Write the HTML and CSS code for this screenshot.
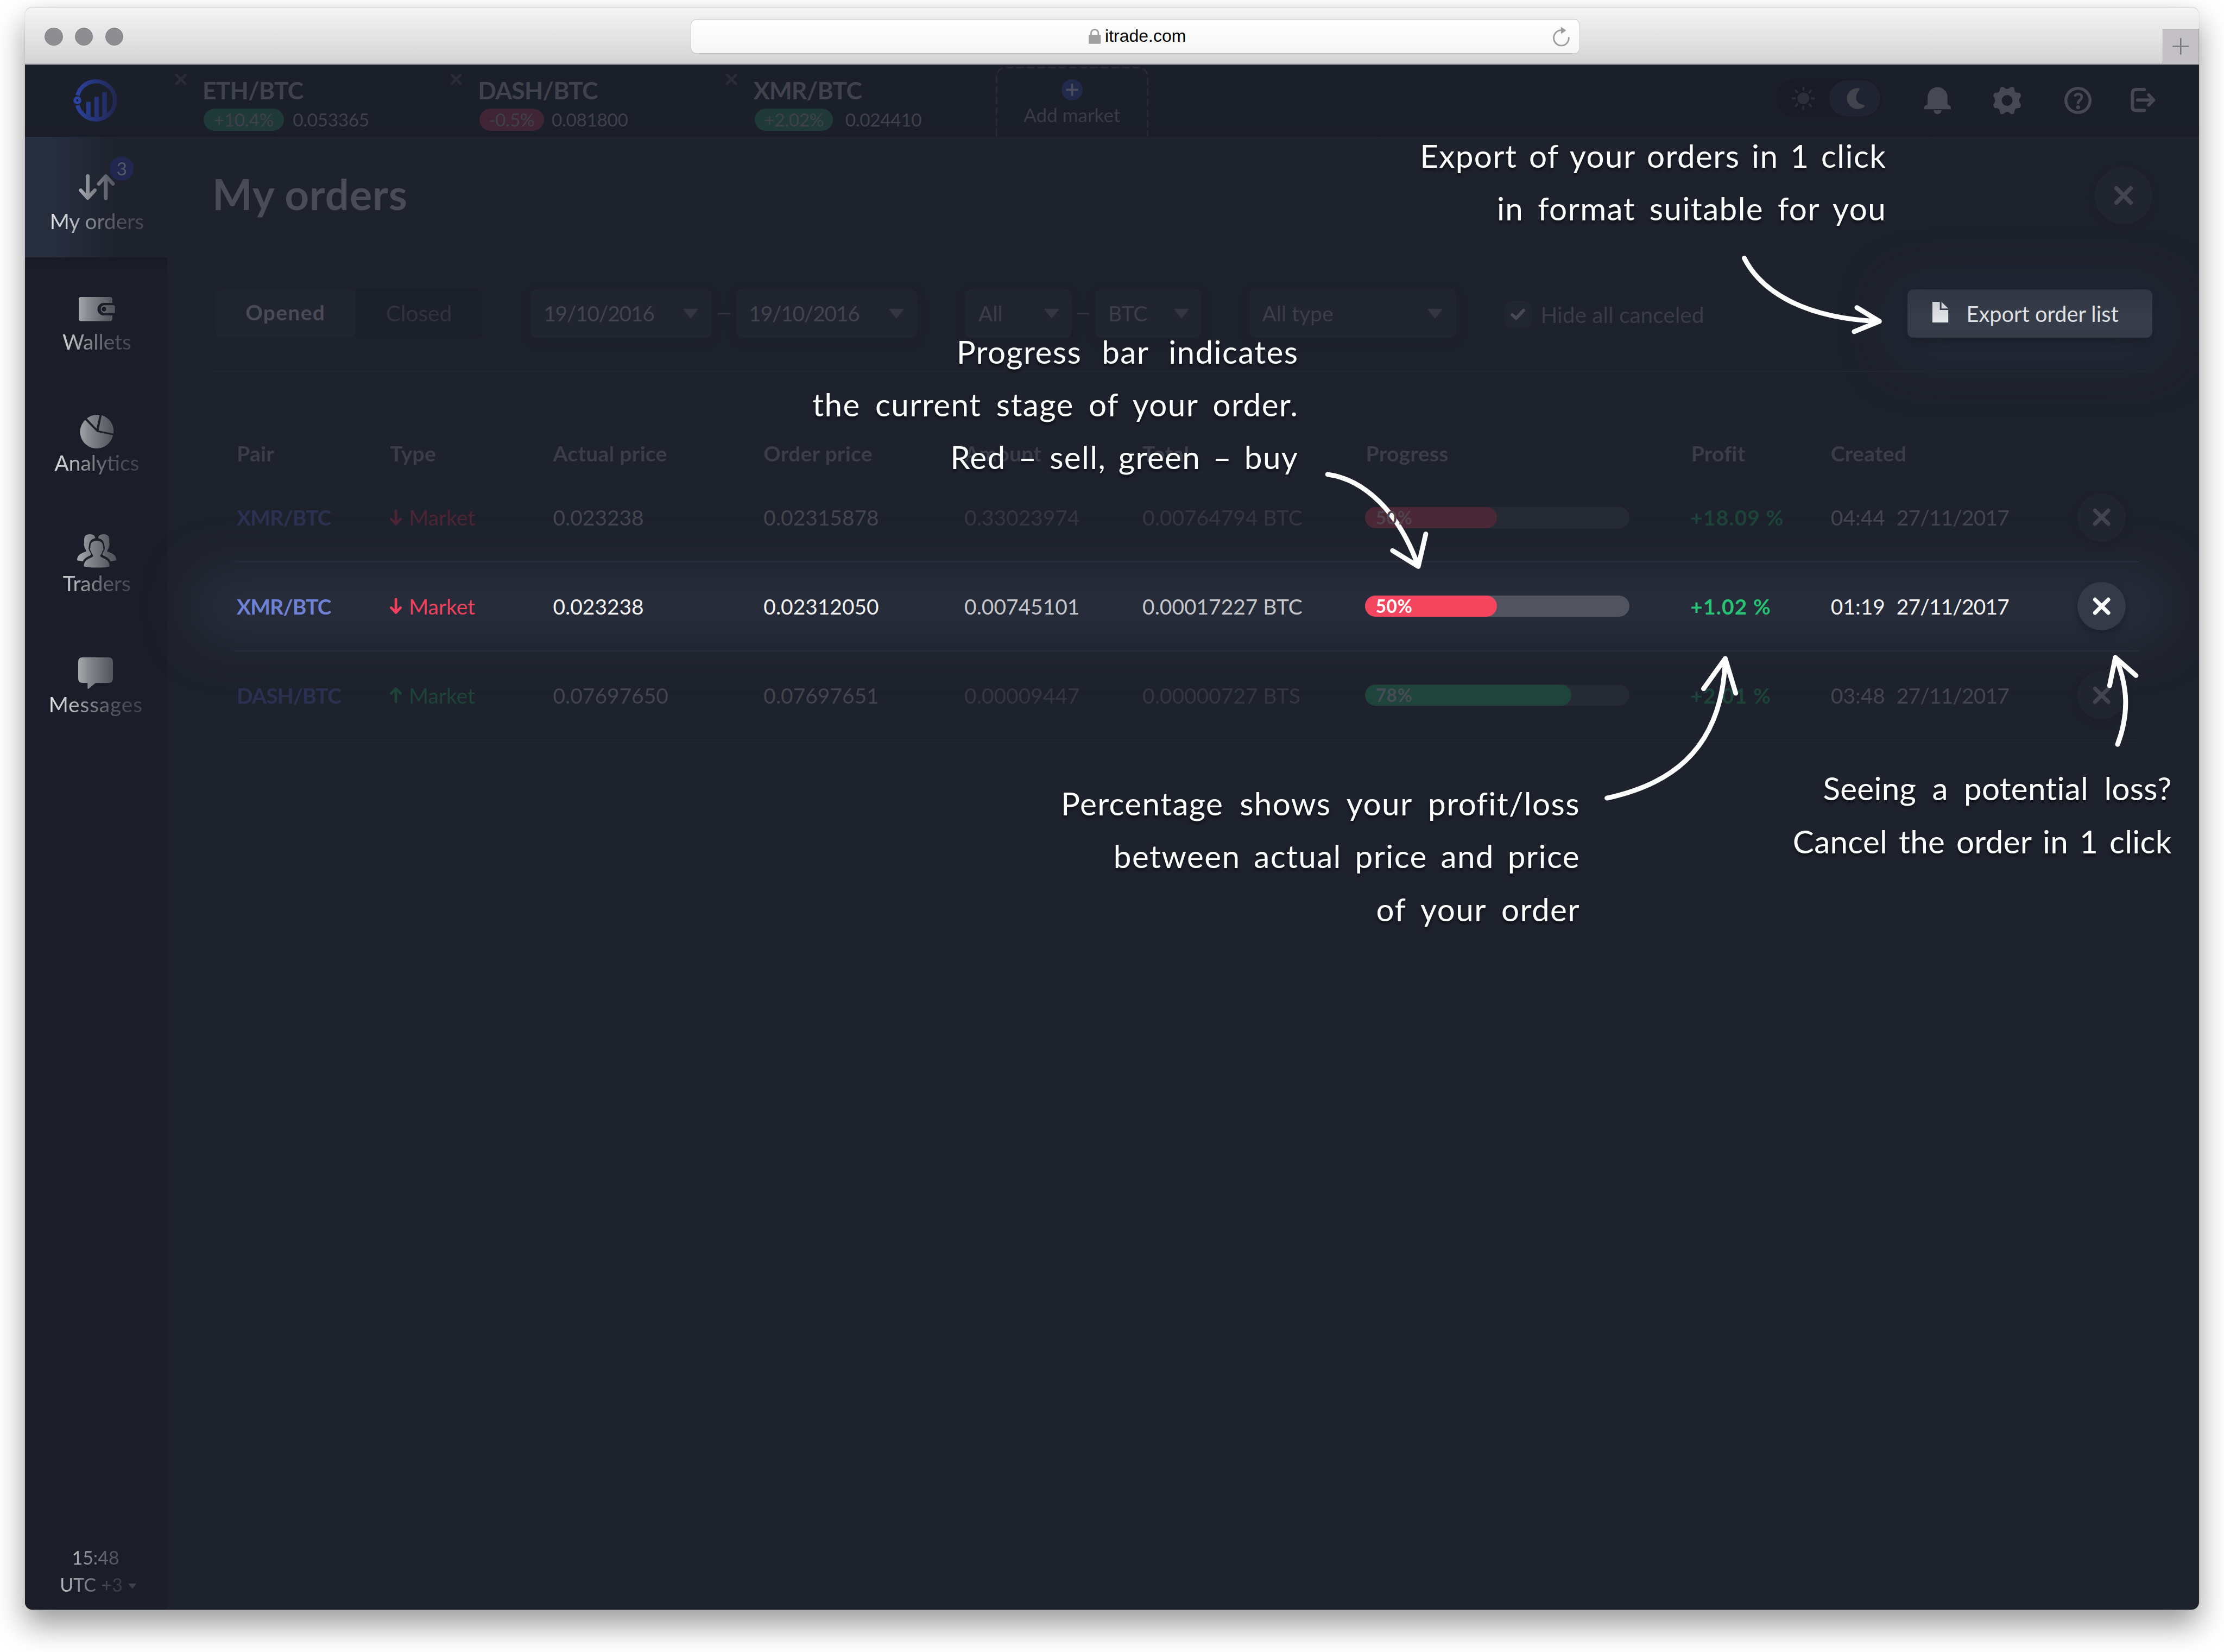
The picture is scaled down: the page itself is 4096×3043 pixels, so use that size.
FILE: index.html
```html
<!DOCTYPE html>
<html lang="en">
<head>
<meta charset="utf-8">
<title>iTrade – My orders</title>
<link rel="stylesheet" href="styles.css">
</head>
<body>
<svg class="defs" aria-hidden="true">
  <defs>
    <linearGradient id="brand" gradientUnits="userSpaceOnUse" x1="0" x2="29" y1="0" y2="0"><stop offset="0" stop-color="#2b43a0"/><stop offset=".5" stop-color="#26357a"/><stop offset="1" stop-color="#20274d"/></linearGradient>
    <linearGradient id="paper" x1="0" x2="0" y1="0" y2="1"><stop offset="0" stop-color="#cdd0d4"/><stop offset="1" stop-color="#e6e7e8"/></linearGradient>
    <symbol id="x" viewBox="0 0 12 12"><path d="M1.6 1.6 10.4 10.4M10.4 1.6 1.6 10.4" fill="none" stroke="currentColor" stroke-width="2.6" stroke-linecap="round"/></symbol>
    <symbol id="caret" viewBox="0 0 10 7"><path d="M.6.3h8.8q.7 0 .3.6L5.5 6.2q-.5.5-1 0L.3.9Q-.1.3.6.3z" fill="currentColor"/></symbol>
    <symbol id="down" viewBox="0 0 8 11"><path d="M4 1v8.6M.9 6.6 4 9.8 7.1 6.6" fill="none" stroke="currentColor" stroke-width="1.7" stroke-linecap="round" stroke-linejoin="round"/></symbol>
    <symbol id="up" viewBox="0 0 8 11"><path d="M4 10V1.4M.9 4.4 4 1.2l3.1 3.2" fill="none" stroke="currentColor" stroke-width="1.7" stroke-linecap="round" stroke-linejoin="round"/></symbol>
  </defs>
</svg>
<div class="window">
  <div class="chrome">
    <div class="lights"><i></i><i></i><i></i></div>
    <div class="address">
      <svg class="lock" viewBox="0 0 8 10"><path d="M1.6 4.5V2.9a2.4 2.4 0 0 1 4.8 0v1.6" fill="none" stroke="#a0a0a0" stroke-width="1"/><rect y="4" width="8" height="6" rx=".3" fill="#a0a0a0"/></svg>
      <span class="t">itrade.com</span>
      <svg class="reload" viewBox="0 0 12 13"><path d="M10.9 7A5 5.1 0 1 1 5.9 2.4" fill="none" stroke="#9c9c9c" stroke-width="1"/><path d="M5.7.2 9.2 2.5 5.7 4.9z" fill="#9c9c9c"/></svg>
    </div>
    <div class="newtab"><svg viewBox="0 0 11 11"><path d="M5.5 0v11M0 5.5h11" stroke="#77777a" stroke-width=".9"/></svg></div>
  </div>

  <div class="app">
    <header class="topbar">
      <svg class="logo" viewBox="0 0 29 28">
        <path d="M2.830 10.740A12.600 12.600 0 1 1 2.830 17.260" fill="none" stroke="url(#brand)" stroke-width="2.800"/>
        <circle cx="2.700" cy="14" r="1.700" fill="none" stroke="#2b43a0" stroke-width="1.900"/>
        <path d="M8.600 14.900h3V25l-3-1.800zM14 11.600h3v14h-3zM19.200 8.500h3.100v15l-3.100 2z" fill="url(#brand)"/>
      </svg>
      <div class="tabs">
        <div class="tab"><svg class="tab-x"><use href="#x"/></svg><div><b class="t">ETH/BTC</b><p><span class="pill up"><span class="t">+10.4%</span></span><span class="t">0.053365</span></p></div></div>
        <div class="tab"><svg class="tab-x"><use href="#x"/></svg><div><b class="t">DASH/BTC</b><p><span class="pill down"><span class="t">-0.5%</span></span><span class="t">0.081800</span></p></div></div>
        <div class="tab"><svg class="tab-x"><use href="#x"/></svg><div><b class="t">XMR/BTC</b><p><span class="pill up wide"><span class="t">+2.02%</span></span><span class="t">0.024410</span></p></div></div>
      </div>
      <div class="addmarket">
        <svg class="frame" viewBox="0 0 101 46"><path d="M.5 46V6.5a6 6 0 0 1 6-6h88a6 6 0 0 1 6 6V46" fill="none" stroke="#292c38" stroke-dasharray="5 2"/></svg>
        <svg class="plus" viewBox="0 0 14 14"><circle cx="7" cy="7" r="7" fill="#222a4c"/><path d="M7 3v8M3 7h8" stroke="#4b4d5b" stroke-width="1.4"/></svg>
        <span class="t">Add market</span>
      </div>
      <div class="tools">
        <div class="theme">
          <svg class="sun" viewBox="0 0 16 16"><circle cx="8" cy="8" r="3.9" fill="currentColor"/><path d="M8 .8v1.6M8 13.6v1.6M.8 8h1.6M13.6 8h1.6M2.9 2.9 4 4M12 12l1.1 1.1M2.9 13.1 4 12M12 4l1.1-1.1" stroke="currentColor" stroke-width="1.4" stroke-linecap="round"/></svg>
          <span class="knob"><svg class="moon" viewBox="0 0 12 14"><path d="M7.4.1C8.6 0 9 .9 8.2 1.7 4.900 5 5.900 10.500 10.600 11.100c1.300.1 1.800.8.800 1.600C9 14.400 5.200 14.400 2.800 12.300-2.200 8 .200.400 7.400.1z" fill="currentColor"/></svg></span>
        </div>
        <svg class="ic bell" viewBox="0 0 17.600 18"><path d="M2.200 6.800a6.600 6.600 0 0 1 13.200 0v4.400q0 .7.900.9 1.300.3 1.300 1.500v1.200H0v-1.200q0-1.200 1.300-1.500.9-.2.9-.9zM6.200 15.500h5.200a2.600 2.600 0 0 1-5.200 0z" fill="currentColor"/></svg>
        <svg class="ic gear" viewBox="-9.200 -9 18.400 18"><path fill="currentColor" fill-rule="evenodd" d="M-4.600-8.500Q-3.500-9.400-2.300-8.800L-1.200-7.900Q0-7.200 1.200-7.900L2.300-8.800Q3.500-9.400 4.600-8.500L4.900-6.700Q5.300-5.300 6.700-5.100L8.200-5Q9.300-4 9.200-2.800L8.200-1.300Q7.600 0 8.200 1.300L9.200 2.800Q9.300 4 8.200 5L6.700 5.100Q5.300 5.300 4.900 6.700L4.600 8.500Q3.500 9.400 2.300 8.800L1.200 7.900Q0 7.200-1.200 7.900L-2.300 8.800Q-3.500 9.400-4.600 8.500L-4.900 6.700Q-5.300 5.300-6.700 5.100L-8.200 5Q-9.300 4-9.200 2.800L-8.200 1.300Q-7.600 0-8.200-1.300L-9.200-2.800Q-9.300-4-8.200-5L-6.700-5.100Q-5.300-5.300-4.900-6.700zM0-3.600a3.600 3.600 0 1 0 0 7.200 3.600 3.600 0 1 0 0-7.200z"/></svg>
        <svg class="ic help" viewBox="0 0 18 18"><circle cx="9" cy="9" r="8" fill="none" stroke="currentColor" stroke-width="2"/><path d="M7.200 5.700C8.500 3.900 11.600 4.700 11.500 6.900 11.400 8.600 9.100 8.800 9.100 10.700" fill="none" stroke="currentColor" stroke-width="1.700" stroke-linecap="round"/><circle cx="9.100" cy="13.500" r="1.300" fill="currentColor"/></svg>
        <svg class="ic exit" viewBox="0 0 16.600 16"><path d="M9 1.100H3.600Q1.200 1.100 1.200 3.300V12.700Q1.200 14.900 3.600 14.900H9" fill="none" stroke="currentColor" stroke-width="2.200" stroke-linecap="round"/><path d="M4.600 8H13M12 4.600 15.200 8 12 11.300" fill="none" stroke="currentColor" stroke-width="2.200" stroke-linecap="round" stroke-linejoin="round"/></svg>
      </div>
    </header>

    <div class="body">
      <nav class="side">
        <a class="item active"><div class="fade">
          <svg class="i-orders" viewBox="0 0 24 17"><path d="M6 1.200V15.500M1.300 10.600 6 15.700 10.700 10.600M18 15.800V1.500M13.300 6.400 18 1.300 22.700 6.400" fill="none" stroke="currentColor" stroke-width="2.400" stroke-linecap="round" stroke-linejoin="round"/></svg>
          <span class="t">My orders</span></div><i class="badge">3</i></a>
        <a class="item"><div class="fade">
          <svg class="i-wallet" viewBox="0 0 24 16"><path d="M1.500 0h19q1.800 0 1.800 1.500V4H16.500a4 4 0 0 0 0 8.200h5.800V14.500q0 1.500-1.800 1.500H1.500Q0 16 0 14.500v-13Q0 0 1.500 0z" fill="currentColor"/><path fill-rule="evenodd" d="M16.700 5.500H23q1 0 1 .8v3.400q0 .9-1 .9h-6.300a2.600 2.600 0 0 1 0-5.100zm0 1a1.550 1.550 0 1 0 0 3.100 1.550 1.550 0 1 0 0-3.100z" fill="currentColor"/></svg>
          <span class="t">Wallets</span></div></a>
        <a class="item"><div class="fade">
          <svg class="i-pie" viewBox="0 0 22 22"><path d="M3.200 3.400 11 11.300 21.600 13.600A11 11 0 1 1 3.200 3.400zM4.300 2.400A11 11 0 0 1 12.800.1L10.700 9.200zM14.100.3A11 11 0 0 1 21.900 12.500L12.100 10.400z" fill="currentColor"/></svg>
          <span class="t">Analytics</span></div></a>
        <a class="item"><div class="fade">
          <svg class="i-people" viewBox="0 0 26 22.600"><path d="M13 4.300c3 0 4.400 1.600 4.200 4.600.6.600.2 1.900-.5 2.400-.3 1.400-.6 1.900-1.300 2.600v.8c1.300 1.400 6.100 1.600 6.100 6.600-2.600 1.100-14.400 1.100-17 0 0-5 4.800-5.200 6.100-6.600v-.8c-.7-.7-1-1.200-1.300-2.600-.7-.5-1.100-1.800-.5-2.400-.2-3 1.200-4.600 4.200-4.600zM12 2.700C9.800 3 8 4.600 7.900 7.700 7.300 9 7.800 10.800 8.600 11.700l.8 1.700c-1 1.400-4.100 1.500-5.600 4.600L0 17.400c0-4 2.700-4.600 6-6v-.8c-.6-.8-1-1.400-1.300-2.900-.3-.5-.3-1.400 0-2C4.400 1.600 5.200 0 8.500 0 10.700 0 12 1 12 2.700zM14 2.700C16.200 3 18 4.600 18.100 7.700c.6 1.300.1 3.100-.7 4l-.8 1.700c1 1.400 4.100 1.500 5.600 4.600L26 17.400c0-4-2.700-4.600-6-6v-.8c.6-.8 1-1.400 1.300-2.900.3-.5.3-1.400 0-2C21.600 1.600 20.800 0 17.500 0 15.300 0 14 1 14 2.700z" fill="currentColor"/></svg>
          <span class="t">Traders</span></div></a>
        <a class="item"><div class="fade">
          <svg class="i-msg" viewBox="0 0 23 21"><path d="M3 0h17q3 0 3 3v11q0 3-3 3h-8.500L7 20.800q-.8.400-.8-.6V17H3q-3 0-3-3V3Q0 0 3 0z" fill="currentColor"/></svg>
          <span class="t wide-label">Messages</span></div></a>
        <div class="clock fade"><span class="t">15:48</span><span class="utc"><span class="t">UTC</span> <em class="t">+3</em><svg><use href="#caret"/></svg></span></div>
      </nav>

      <main class="main">
        <div class="titlebar"><h1 class="t">My orders</h1><button class="round big"><svg><use href="#x"/></svg></button></div>

        <div class="filters">
          <div class="seg"><span class="on"><span class="t">Opened</span></span><span class="off"><span class="t">Closed</span></span></div>
          <div class="sel w120 first"><span class="t">19/10/2016</span><svg><use href="#caret"/></svg></div>
          <i class="dash"></i>
          <div class="sel w120"><span class="t">19/10/2016</span><svg><use href="#caret"/></svg></div>
          <div class="sel w70"><span class="t">All</span><svg><use href="#caret"/></svg></div>
          <i class="dash"></i>
          <div class="sel w70b"><span class="t">BTC</span><svg><use href="#caret"/></svg></div>
          <div class="sel w137"><span class="t">All type</span><svg><use href="#caret"/></svg></div>
          <label class="check"><i><svg viewBox="0 0 10 8"><path d="M1.200 4.300 3.700 6.600 8.700 1.300" fill="none" stroke="currentColor" stroke-width="2.100" stroke-linecap="round" stroke-linejoin="round"/></svg></i><span class="t">Hide all canceled</span></label>
          <button class="export"><svg viewBox="0 0 10.500 13.700"><path d="M0 0h4.900v5.400h5.600v8.300H0zM6 0l4.500 4.400H6z" fill="url(#paper)"/></svg><span class="t">Export order list</span></button>
        </div>

        <section class="table">
          <div class="row head"><b class="t">Pair</b><b class="t">Type</b><b class="t">Actual price</b><b class="t">Order price</b><b class="t">Amount</b><b class="t">Total</b><b class="t">Progress</b><b class="t">Profit</b><b class="t">Created</b></div>
          <div class="row dim sell first">
            <b class="pair t">XMR/BTC</b><span class="type"><svg><use href="#down"/></svg><span class="t">Market</span></span><span class="num t">0.023238</span><span class="num t">0.02315878</span><span class="sub t">0.33023974</span><span class="sub t">0.00764794 BTC</span>
            <span class="bar"><i style="width:50%"></i><b class="t">50%</b></span><b class="profit t">+18.09 %</b><span class="date"><span class="t">04:44</span><span class="t">27/11/2017</span></span><button class="round"><svg><use href="#x"/></svg></button>
          </div>
          <div class="row lit sell">
            <b class="pair t">XMR/BTC</b><span class="type"><svg><use href="#down"/></svg><span class="t">Market</span></span><span class="num t">0.023238</span><span class="num t">0.02312050</span><span class="sub t">0.00745101</span><span class="sub t">0.00017227 BTC</span>
            <span class="bar"><i style="width:50%"></i><b class="t">50%</b></span><b class="profit t">+1.02 %</b><span class="date"><span class="t">01:19</span><span class="t">27/11/2017</span></span><button class="round"><svg><use href="#x"/></svg></button>
          </div>
          <div class="row dim buy">
            <b class="pair t">DASH/BTC</b><span class="type"><svg><use href="#up"/></svg><span class="t">Market</span></span><span class="num t">0.07697650</span><span class="num t">0.07697651</span><span class="sub t">0.00009447</span><span class="sub t">0.00000727 BTS</span>
            <span class="bar"><i style="width:78%"></i><b class="t">78%</b></span><b class="profit t">+2.01 %</b><span class="date"><span class="t">03:48</span><span class="t">27/11/2017</span></span><button class="round"><svg><use href="#x"/></svg></button>
          </div>
        </section>
      </main>
    </div>

    <div class="notes">
      <svg class="arrows" viewBox="0 0 1440 1024"><g fill="none" stroke="#fff" stroke-width="3.200" stroke-linecap="round" stroke-linejoin="round">
        <path d="M1139 128.200C1150 150 1178 168 1228 170.100M1213.600 161 1228.500 170.100 1211.800 176.900"/>
        <path d="M863 271.500C888 275 910 297 922.500 331M928 311 923 332.500 906 322"/>
        <path d="M1048 486C1085 478 1124 458 1126.300 395M1112 413.500 1126.400 393.500 1133.300 416.500"/>
        <path d="M1386.300 450.400C1394 430 1393 412 1385.500 394M1381 411.500 1384.800 392.800 1398.500 404.800"/>
      </g></svg>
      <p class="note n1"><span>Export of your orders in 1 click</span><span>in format suitable for you</span></p>
      <p class="note n2"><span>Progress bar indicates</span><span>the current stage of your order.</span><span>Red – sell, green – buy</span></p>
      <p class="note n3"><span>Percentage shows your profit/loss</span><span>between actual price and price</span><span>of your order</span></p>
      <p class="note n4"><span>Seeing a potential loss?</span><span>Cancel the order in 1 click</span></p>
    </div>
  </div>
</div>
</body>
</html>
```
FILE: styles.css
```css
/* 1rem = 10 design units of the 1440-wide layout */
html { font-size: 27.801px; background: #fff; }
*, *::before, *::after { box-sizing: border-box; }
body { margin: 0; padding: .485rem 1.667rem 0; font-family: Lato, "Open Sans", sans-serif; font-size: 1.4rem; overflow: hidden; height: 3043px; }
svg { display: block; overflow: visible; flex: none; }
i, em { font-style: normal; }
p, h1 { margin: 0; }
b { font-weight: 700; }
button { border: 0; padding: 0; background: none; font: inherit; color: inherit; display: flex; align-items: center; }
.defs { position: absolute; width: 0; height: 0; }
.t { white-space: nowrap; }

.window { width: 144rem; border-radius: .5rem; box-shadow: 0 1rem 2rem rgba(0,0,0,.4), 0 0 1px rgba(0,0,0,.5); }

/* browser chrome */
.chrome { height: 3.8rem; display: flex; align-items: flex-start; position: relative; border-radius: .5rem .5rem 0 0; background: linear-gradient(#f4f4f4, #d4d4d4); border-top: 1px solid #d8d8d8; border-bottom: .1rem solid #a9a7a9; }
.lights { display: flex; gap: .8rem; padding: 1.3rem 0 0 1.3rem; width: 44.1rem; }
.lights i { width: 1.2rem; height: 1.2rem; border-radius: 50%; background: #8e8d92; border: 1px solid #7c7b80; }
.address { width: 58.9rem; height: 2.3rem; margin-top: .75rem; border-radius: .4rem; border: 1px solid #c4c4c4; background: linear-gradient(#fff, #f6f6f6); display: flex; align-items: center; padding-left: 26.3rem; font: 1.15rem/2.3rem "Liberation Sans", sans-serif; color: #000; }
.lock { width: .8rem; height: 1rem; margin-right: .3rem; }
.reload { width: 1.2rem; height: 1.3rem; margin: 0 .6rem 0 auto; }
.newtab { width: 2.4rem; height: 2.35rem; margin: 1.37rem 0 0 auto; background: #c3c1c4; border: 1px solid #a5a3a6; border-bottom: 0; display: grid; place-items: center; }
.newtab svg { width: 1.1rem; height: 1.1rem; }

/* application */
.app { position: relative; height: 102.35rem; background: #1e222d; border-radius: 0 0 .5rem .5rem; overflow: hidden; }
.topbar { height: 4.78rem; background: linear-gradient(#1b1f2a 85%, #1a1d28); display: flex; align-items: flex-start; }
.logo { width: 2.9rem; height: 2.8rem; margin: .95rem 3.35rem 0 3.2rem; }
.tabs { display: flex; }
.tab { width: 18.25rem; display: flex; padding-left: .45rem; }
.tab-x { width: .8rem; height: .8rem; margin: .57rem 1.13rem 0 0; color: #2a2c38; }
.tab b { display: block; font-size: 1.6rem; line-height: 2rem; margin: .67rem 0 0 -.08rem; letter-spacing: -.03rem; color: #40424d; }
.tab p { display: flex; align-items: center; height: 1.5rem; margin-top: .23rem; font-size: 1.2rem; letter-spacing: -.012rem; line-height: 1.5rem; color: #3f414c; }
.pill { width: 5.3rem; height: 1.5rem; border-radius: .75rem; margin-right: .6rem; text-align: center; background: #1f3a39; }
.pill.down { width: 4.3rem; background: #402534; margin-right: .5rem; }
.pill.wide { width: 5.2rem; margin-right: .8rem; }
.addmarket { position: relative; width: 10.1rem; height: 4.6rem; margin: .15rem 0 0 .1rem; display: flex; flex-direction: column; align-items: center; font-size: 1.26rem; color: #393b46; line-height: 1.6rem; }
.frame { position: absolute; inset: 0; width: 100%; height: 100%; }
.plus { width: 1.4rem; height: 1.4rem; margin: .82rem 0 .13rem; }
.tools { display: flex; align-items: center; margin-left: auto; padding-right: 2.87rem; height: 4.72rem; color: #464854; }
.theme { display: flex; align-items: center; justify-content: space-between; width: 7rem; height: 2.6rem; border-radius: 1.3rem; background: #191c27; padding: 0 .1rem 0 .98rem; margin: -.25rem 2.8rem 0 0; }
.sun { width: 1.6rem; height: 1.6rem; color: #2c2e39; }
.knob { width: 3.4rem; height: 2.4rem; border-radius: 1.2rem; background: #202432; display: grid; place-items: center; }
.moon { width: 1.2rem; height: 1.4rem; color: #41444c; margin-left: .1rem; }
.bell { width: 1.76rem; height: 1.8rem; margin-right: 2.8rem; }
.gear { width: 1.84rem; height: 1.8rem; margin-right: 2.9rem; }
.help { width: 1.8rem; height: 1.8rem; margin-right: 2.57rem; }
.exit { width: 1.66rem; height: 1.6rem; }

.body { display: flex; height: 97.57rem; }
.side { width: 9.4rem; flex: none; background: #1b1e29; display: flex; flex-direction: column; color: #fff; }
.fade { -webkit-mask-image: linear-gradient(90deg, #000 0, rgba(0,0,0,.88) 1.6rem, rgba(0,0,0,.72) 3rem, rgba(0,0,0,.48) 4.2rem, rgba(0,0,0,.27) 5.6rem, rgba(0,0,0,.18) 7rem, rgba(0,0,0,.16)); mask-image: linear-gradient(90deg, #000 0, rgba(0,0,0,.88) 1.6rem, rgba(0,0,0,.72) 3rem, rgba(0,0,0,.48) 4.2rem, rgba(0,0,0,.27) 5.6rem, rgba(0,0,0,.18) 7rem, rgba(0,0,0,.16)); }
.item { position: relative; height: 8rem; display: block; }
.item .fade { height: 8rem; display: flex; flex-direction: column; align-items: center; justify-content: flex-end; padding: 0 0 1.4rem .1rem; line-height: 2rem; }
.wide-label { letter-spacing: .03rem; margin-left: -.15rem; }
.active { background: linear-gradient(90deg, #262e3e 0, #262e3e 1.8rem, #232836 4rem, #1e222d 6.2rem); }
.active + .item { background: linear-gradient(#181b25, #1b1e29 1rem); }
.i-orders { width: 2.4rem; height: 1.7rem; margin-bottom: .42rem; }
.i-wallet { width: 2.4rem; height: 1.6rem; margin-bottom: .4rem; }
.i-pie { width: 2.2rem; height: 2.2rem; }
.i-people { width: 2.6rem; height: 2.26rem; }
.i-msg { width: 2.3rem; height: 2.3rem; margin: 0 .2rem -.1rem 0; }
.badge { position: absolute; left: 5.6rem; top: 1.3rem; width: 1.6rem; height: 1.6rem; border-radius: 50%; background: #202850; color: #555866; font-size: 1.2rem; line-height: 1.6rem; text-align: center; }
.clock { margin-top: auto; height: 4.35rem; display: flex; flex-direction: column; font-size: 1.22rem; line-height: 1.8rem; padding-left: 3.1rem; }
.utc { display: flex; gap: .35rem; margin-left: -.8rem; opacity: .85; }
.utc em { opacity: .7; }
.utc svg { width: .55rem; height: .4rem; margin-top: .8rem; }

.main { flex: 1; position: relative; }
.titlebar { display: flex; justify-content: space-between; align-items: flex-start; padding: 1.98rem 3.1rem 0 3rem; height: 10.1rem; color: #4a4b57; }
h1 { font-size: 2.8rem; line-height: 3.4rem; margin-top: .12rem; font-weight: 700; letter-spacing: .03rem; }
.round { width: 3.2rem; height: 3.2rem; border-radius: 50%; justify-content: center; background: #21252f; color: #42444f; box-shadow: 0 .2rem .6rem rgba(15,20,30,.15); }
.round svg { width: 1.2rem; height: 1.2rem; }
.round.big { width: 3.8rem; height: 3.8rem; }
.round.big svg { width: 1.3rem; height: 1.3rem; }

.filters { display: flex; align-items: center; height: 3.2rem; margin-left: 3.2rem; color: #42444e; }
.seg { display: flex; width: 17.7rem; height: 3.2rem; line-height: 3.2rem; border-radius: .4rem; background: #1c202b; margin-right: 3.2rem; }
.seg .on { width: 9.3rem; border-radius: .4rem; background: #21252f; color: #4a4b57; font-weight: 700; padding-left: 2rem; line-height: 3.05rem; letter-spacing: .05rem; }
.seg .off { padding-left: 2rem; color: #30333e; font-size: 1.46rem; }
.sel { height: 3.2rem; border-radius: .4rem; background: #21252f; display: flex; align-items: center; justify-content: space-between; padding: 0 .9rem 0 .85rem; box-shadow: 0 .2rem .8rem rgba(15,25,35,.18); }
.sel svg { width: 1rem; height: .7rem; color: #343640; }
.w120 { width: 12rem; letter-spacing: -.045rem; }
.w70, .w70b { width: 7rem; color: #3c3e48; padding-right: .8rem; }
.w70 { margin-left: 3.2rem; }
.w137 { width: 13.7rem; margin-left: 3.2rem; color: #3c3e48; }
.dash { width: .8rem; height: .1rem; background: #31343e; margin: 0 .4rem 0 .4rem; }
.check { display: flex; align-items: center; margin-left: 3.2rem; gap: .6rem; color: #3a3c46; padding-top: .15rem; font-size: 1.46rem; }
.check i { width: 1.8rem; height: 1.8rem; border-radius: .4rem; background: #222630; display: grid; place-items: center; color: #484a56; }
.check svg { width: 1rem; height: .8rem; }
.export { width: 16.2rem; height: 3.2rem; margin: 0 3.1rem 0 auto; border-radius: .4rem; background: linear-gradient(#2f3541, #373d4a 60%, #363b48); color: #dfe0e2; padding-left: 1.65rem; gap: 1.2rem; font-size: 1.43rem; box-shadow: 0 .3rem .6rem rgba(20,22,32,.45), 0 .6rem 3.2rem 1.2rem rgba(44,51,68,.42); }
.export svg { width: 1.05rem; height: 1.37rem; margin-top: -.15rem; }

.table { position: relative; margin: 2.22rem 3rem 0 3rem; border-top: .1rem solid #22262f; padding: 0 1rem 0 1.5rem; }
.table::before { content: ""; position: absolute; left: -1.2rem; right: -1rem; top: 13.2rem; height: 4.6rem; border-radius: 2rem; background: rgba(44,50,65,.75); filter: blur(1.6rem); }
.row { position: relative; display: grid; grid-template-columns: 10.15rem 10.8rem 13.95rem 13.3rem 11.8rem 14.8rem 21.55rem 9.25rem 16.35rem 3.2rem; align-items: center; height: 5.9rem; border-bottom: .1rem solid #21252f; padding-left: .12rem; }
.row.head { height: 6.73rem; padding-top: 4.1rem; color: #3b3d48; letter-spacing: .012rem; }
.row.first { height: 5.87rem; }
.row.first, .row.lit { border-bottom-color: #2a2f3b; }
.num { color: #43454f; }
.sub { color: #353740; }
.type { display: flex; align-items: center; gap: .45rem; }
.type svg { width: .8rem; height: 1.1rem; }
.dim .pair { color: #2b3251; }
.pair { letter-spacing: -.03rem; }
.dim.sell .type { color: #4c2535; }
.dim.buy .type, .dim .profit { color: #1d4439; }
.profit { letter-spacing: .04rem; margin-left: -.05rem; }
.bar { width: 17.5rem; height: 1.4rem; border-radius: .7rem; background: #262a35; display: grid; color: #50434f; margin-left: -.05rem; }
.bar > * { grid-area: 1 / 1; }
.bar i { border-radius: .7rem; height: 1.4rem; background: #4a2836; }
.bar b { font-size: 1.2rem; line-height: 1.4rem; padding-left: .7rem; z-index: 1; letter-spacing: .02rem; }
.dim.buy .bar i { background: #1e443b; }
.dim.buy .bar { color: #474c57; }
.date { display: flex; gap: .75rem; color: #43454f; }
.date .t:last-child { letter-spacing: -.03rem; }
.lit .pair { color: #6f82d8; }
.lit .type { color: #f2415c; }
.lit .num, .lit .date { color: #f4f4f5; }
.lit .sub { color: #c6c7ca; }
.lit .bar { background: #51545f; color: #fff; }
.lit .bar i { background: #f4455e; }
.lit .profit { color: #26c474; }
.lit .round { background: #343a47; color: #fff; box-shadow: 0 .2rem .5rem rgba(15,18,28,.4); }

/* tour annotations over the page */
.notes { position: absolute; inset: 0; }
.arrows { position: absolute; left: 0; top: 0; width: 144rem; height: 102.4rem; }
.note { position: absolute; display: flex; flex-direction: column; align-items: flex-end; color: #fff; font-weight: 400; font-size: 2.1rem; line-height: 3.5rem; letter-spacing: .05rem; text-shadow: 0 .15rem .2rem rgba(0,0,0,.6); }
.note span { display: block; white-space: nowrap; text-align-last: justify; }
.n1 { right: 20.7rem; top: 4.26rem; }
.n1 :nth-child(1) { width: 30.9rem; } .n1 :nth-child(2) { width: 25.8rem; }
.n2 { right: 59.65rem; top: 17.25rem; }
.n2 :nth-child(1) { width: 22.65rem; } .n2 :nth-child(2) { width: 32.2rem; } .n2 :nth-child(3) { width: 23.06rem; }
.n3 { right: 41rem; top: 47.19rem; }
.n3 :nth-child(1) { width: 34.38rem; } .n3 :nth-child(2) { width: 30.9rem; } .n3 :nth-child(3) { width: 13.5rem; }
.n4 { right: 1.8rem; top: 46.19rem; letter-spacing: .01rem; }
.n4 :nth-child(1) { width: 23.1rem; } .n4 :nth-child(2) { width: 25.1rem; }
```
